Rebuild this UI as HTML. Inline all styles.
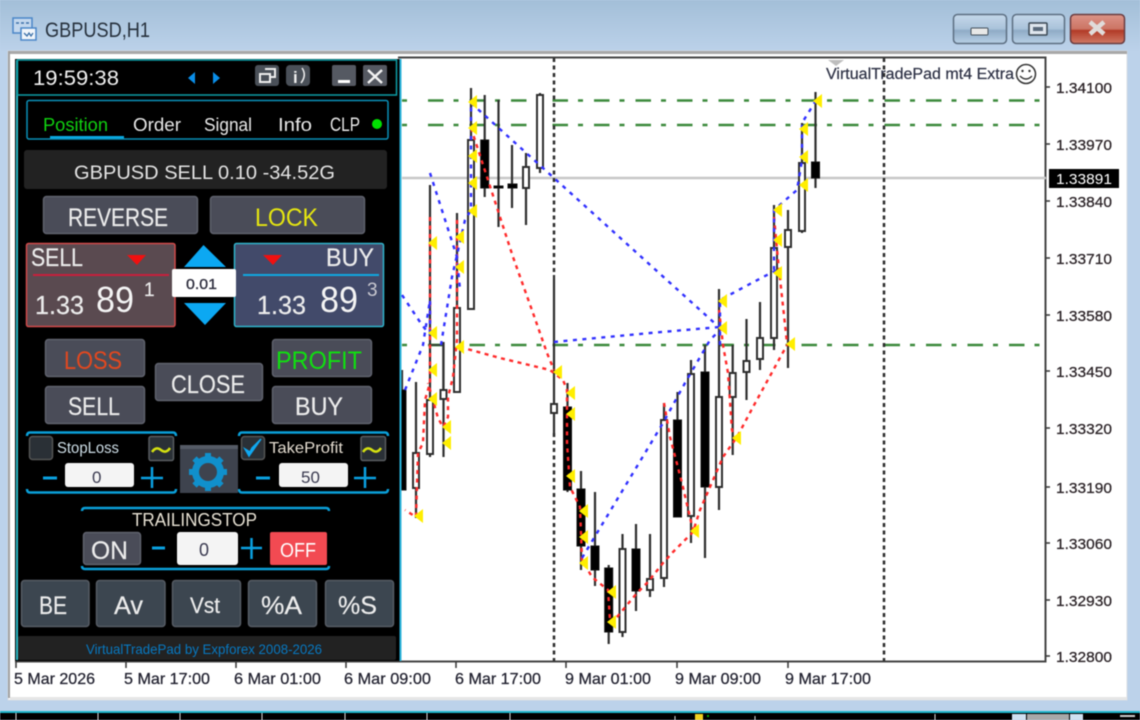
<!DOCTYPE html>
<html><head><meta charset="utf-8"><title>GBPUSD,H1</title>
<style>
html,body{margin:0;padding:0;width:1140px;height:720px;overflow:hidden;background:#bcd2ea}
svg{display:block;filter:blur(.55px)}
text{font-family:"Liberation Sans",sans-serif}
.b{fill:#4a4c58;stroke:#5f626d;stroke-width:1.5}
.c{fill:#3c4650;stroke:#565c64;stroke-width:1.5}
.t{fill:#ececec;stroke:#ececec;stroke-width:.2}
.w{fill:#fff;stroke:#2e2e2e;stroke-width:2}
.k{fill:#000;stroke:#111;stroke-width:1}
.br{fill:none;stroke:#0a9fd8;stroke-width:2.5}
.px{font-size:15px;fill:#2a2226;stroke:#2a2226;stroke-width:.25}
.tx{font-size:16px;fill:#222230;stroke:#222230;stroke-width:.25}
</style></head><body>
<svg width="1140" height="720" viewBox="0 0 1140 720" xmlns="http://www.w3.org/2000/svg">
<defs>
<linearGradient id="sky" x1="0" y1="0" x2="0" y2="1"><stop offset="0" stop-color="#a3bfd8"/><stop offset="1" stop-color="#bcd2ea"/></linearGradient>
<linearGradient id="wb" x1="0" y1="0" x2="0" y2="1"><stop offset="0" stop-color="#c5d8ea"/><stop offset=".5" stop-color="#a9c2da"/><stop offset=".55" stop-color="#8fabc6"/><stop offset="1" stop-color="#b8d0e6"/></linearGradient>
<linearGradient id="wr" x1="0" y1="0" x2="0" y2="1"><stop offset="0" stop-color="#dc9488"/><stop offset=".5" stop-color="#cc7464"/><stop offset=".55" stop-color="#b23a26"/><stop offset="1" stop-color="#d07a66"/></linearGradient>
</defs>
<rect width="1140" height="720" fill="#bcd2ea"/>
<rect width="1140" height="52" fill="url(#sky)"/>
<!-- title icon -->
<rect x="13" y="18" width="19" height="15" fill="#c4d8ee" stroke="#4a86c8" stroke-width="1.5"/>
<path d="M16 23h3M21 23h3M26 23h3" stroke="#3a6fa8" stroke-width="1.5"/>
<rect x="21" y="28" width="15" height="12" fill="#f2f6fb" stroke="#4a86c8" stroke-width="1.5"/>
<path d="M24 33l3 3 2-3 2 3 2-3" stroke="#3a6fa8" stroke-width="1.3" fill="none"/>
<text x="45" y="37" font-size="21" fill="#26303c" textLength="105" lengthAdjust="spacingAndGlyphs">GBPUSD,H1</text>
<!-- window buttons -->
<rect x="953.5" y="14.500" width="53" height="29" rx="4" fill="url(#wb)" stroke="#5d6f82" stroke-width="1.5"/>
<rect x="971" y="28" width="17" height="7" rx="1" fill="#e8e8e8" stroke="#44505c"/>
<rect x="1012.500" y="14.500" width="52" height="29" rx="4" fill="url(#wb)" stroke="#5d6f82" stroke-width="1.500"/>
<rect x="1029" y="23" width="18" height="12" rx="1" fill="#dfe6ee" stroke="#3b4854" stroke-width="1.500"/>
<rect x="1033" y="27" width="10" height="4" fill="#5a6a7c"/>
<rect x="1070.500" y="14.500" width="54" height="29" rx="4" fill="url(#wr)" stroke="#6a3c40" stroke-width="1.500"/>
<path d="M1090 22l14 12M1104 22l-14 12" stroke="#e0dcda" stroke-width="4.500"/>
<!-- client -->
<rect x="8" y="51" width="1119" height="649" fill="#fff" stroke="#d8dde3" stroke-width="1"/>
<rect x="8" y="51" width="1119" height="3" fill="#a8a8a8"/>
<rect x="8" y="51" width="2" height="647" fill="#a0a0a0"/>
<rect x="10" y="697" width="1117" height="3" fill="#e6e6e6"/>
<!-- bottom strip -->
<rect y="711" width="1140" height="2" fill="#1fb7cc"/>
<rect y="713" width="1140" height="7" fill="#000"/>
<path d="M16 713v7M98 713v7M180 713v7M262 713v7M345 713v7M427 713v7M510 713v7M675 716v4M755 716v4M935 714v6" stroke="#ddd" stroke-width="1"/>
<rect x="695" y="714" width="8" height="6" fill="#f0d020"/><rect x="707" y="715" width="2" height="2" fill="#0a0"/>
<rect x="1012" y="714" width="14" height="6" fill="#cfe0f0"/><rect x="1027" y="714" width="42" height="6" fill="#a8a8a8"/><rect x="1070" y="714" width="13" height="6" fill="#cfe0f0"/><rect x="1120" y="715" width="15" height="2" fill="#ccc"/>

<!-- chart frame -->
<rect x="401" y="58" width="644.500" height="603" fill="#fff"/>
<path d="M15 661.500H1045.500V57.500H398" fill="none" stroke="#444" stroke-width="2"/>
<!-- price ticks -->
<path d="M1046 87h4M1046 144h4M1046 201h4M1046 258h4M1046 315h4M1046 371h4M1046 428h4M1046 487h4M1046 543h4M1046 600h4M1046 656h4" stroke="#333" stroke-width="1.500"/>
<!-- time ticks -->
<path d="M16 662v6M126 662v6M236 662v6M346 662v6M456 662v6M566 662v6M677 662v6M788 662v6" stroke="#333" stroke-width="1.500"/>
<!-- green levels -->
<g stroke="#3c8a3c" stroke-width="2.400" fill="none" stroke-dasharray="15.500 10 5 11">
<path d="M428 100.500H1040" stroke-dashoffset="0"/>
<path d="M428 125H1040"/>
<path d="M428 345H1040"/>
</g>
<path d="M402 100.500h13M402 125h13M402 345h13" stroke="#3c8a3c" stroke-width="2.400" stroke-dasharray="5 11" />
<path d="M430 345h13M719 345h14" stroke="#3c8a3c" stroke-width="2.400"/>
<!-- price line & separators -->
<path d="M402 178H1046" stroke="#c8c8c8" stroke-width="2.400"/>
<path d="M554 58V275M554 433V661M884 58V661" stroke="#2c2c2c" stroke-width="2.500" stroke-dasharray="4 3.500"/>
<!-- wicks -->
<path d="M402 370V490M416 382V518M430 185V457M443.500 342V457M457 213V392M471 88V309M484.700 95V197M498.500 100V227M512 145V208M526 153V225M540 93V173M554 275V433M567.500 383V492M581 471V570M595 492V586M608.700 565V644M622.500 534V637M636 524V611M650 534V597M664 403V587M677.500 392V517M691 360V543M705 345V558M719 289V510M732.700 345V455M746.500 319V400M760 302V370M774 205V350M788 210V368M802 123V233M815.500 92V188" stroke="#2e2e2e" stroke-width="2.200" fill="none"/>
<!-- bodies white -->
<rect class="w" x="413" y="453" width="6" height="35"/>
<rect class="w" x="427" y="400" width="6" height="54"/>
<path d="M430 345h13v45" fill="none" stroke="#333" stroke-width="1.500"/>
<rect class="w" x="440.500" y="390" width="6" height="9"/>
<rect class="w" x="454" y="308" width="6" height="84"/>
<rect class="w" x="468" y="140" width="6" height="169"/>
<rect class="w" x="523" y="167" width="6" height="21"/>
<rect class="w" x="537" y="95" width="6" height="73"/>
<rect class="w" x="551" y="404" width="6" height="9"/>
<rect class="w" x="619.500" y="549" width="6" height="83"/>
<rect class="w" x="647" y="579" width="6" height="11"/>
<rect class="w" x="661" y="420" width="6" height="158"/>
<rect class="w" x="688" y="374" width="6" height="142"/>
<rect class="w" x="716" y="397" width="6" height="90"/>
<rect class="w" x="729.700" y="373" width="6" height="24"/>
<rect class="w" x="743.500" y="361" width="6" height="11"/>
<rect class="w" x="757" y="338" width="6" height="21"/>
<rect class="w" x="771" y="248" width="6" height="90"/>
<rect class="w" x="785" y="230" width="6" height="17"/>
<rect class="w" x="799" y="163" width="6" height="68"/>
<!-- bodies black -->
<rect class="k" x="401" y="390" width="5" height="100"/>
<rect class="k" x="480.700" y="140" width="8" height="48"/>
<rect class="k" x="494" y="186" width="9" height="2"/>
<rect class="k" x="508" y="184" width="9" height="4"/>
<rect class="k" x="563.500" y="407" width="8" height="83"/>
<rect class="k" x="577" y="489" width="8" height="57"/>
<rect class="k" x="591" y="546" width="8" height="24"/>
<rect class="k" x="604.700" y="568" width="8" height="64"/>
<rect class="k" x="632" y="549" width="8" height="42"/>
<rect class="k" x="673.500" y="420" width="8" height="97"/>
<rect class="k" x="701" y="372" width="8" height="115"/>
<rect class="k" x="811.500" y="162" width="8" height="16"/>
<!-- red lines -->
<g fill="none" stroke="#ff2a2a" stroke-width="2.400" stroke-dasharray="4 4.500">
<path d="M471 128L488 180L500 217L513 257L533 313L547 353L554 370"/>
<path d="M460 347L500 358L550 370L563 380L567 390V443L570 487L580 507L582 560L592 577L608 590L610 620"/>
<path d="M610 622L617 617L637 593L648 582L663 563L673 552L693 532L700 510L723 457L737 437L753 407L787 345"/>
<path d="M664 403L670 437L682 483L693 530"/>
<path d="M719 310L723 345L728 373L732 430L735 438"/>
<path d="M774 217L778 260L787 343"/>
<path d="M430 217V383L425 400L423 443L418 453L416 517L405 510"/>
<path d="M457 220V340L453 377L448 397V417L443 427L438 418L428 383"/>
</g>
<!-- blue lines -->
<g fill="none" stroke="#3030ff" stroke-width="2.400" stroke-dasharray="4 5.500">
<path d="M402 295L422 325L430 335"/>
<path d="M405 390L423 345L430 300V335"/>
<path d="M430 173L457 257L460 290"/>
<path d="M441 345L452 277L465 220L471 210V103"/>
<path d="M471 103L554 178L648 263L720 328"/>
<path d="M554 342L650 333L720 327"/>
<path d="M582 558L663 423L685 383L710 340L720 330"/>
<path d="M720 345V300L763 277L777 270"/>
<path d="M774 270V210L797 190L802 160V123L815 102"/>
</g>
<!-- yellow arrows -->
<g fill="#ffee00">
<path d="M468 102l9-7v14zM468 128l9-7v14zM468 156l9-7v14zM468 183l9-7v14zM468 211l9-7v14zM428 243l9-7v14zM455 237l9-7v14zM455 267l9-7v14zM428 333l9-7v14zM455 347l9-7v14zM428 370l9-7v14zM428 399l9-7v14zM442 427l9-7v14zM442 443l9-7v14zM414 516l9-7v14zM553 372l9-7v14zM566 393l9-7v14zM566 414l9-7v14zM566 476l9-7v14zM579 511l9-7v14zM579 537l9-7v14zM579 563l9-7v14zM607 592l9-7v14zM607 622l9-7v14zM690 531l9-7v14zM732 438l9-7v14zM786 344l9-7v14zM718 301l9-7v14zM718 328l9-7v14zM773 273l9-7v14zM773 240l9-7v14zM773 210l9-7v14zM799 185l9-7v14zM799 157l9-7v14zM799 129l9-7v14zM813 101l9-7v14z"/>
</g>
<!-- chart labels -->
<path d="M828 60h16l-8 6z" fill="#bdbdbd"/>
<text x="826" y="79" font-size="15.500" fill="#2c3044" stroke="#2c3044" stroke-width=".2" textLength="188" lengthAdjust="spacingAndGlyphs">VirtualTradePad mt4 Extra</text>
<circle cx="1026" cy="74" r="9.500" fill="#fff" stroke="#333" stroke-width="1.500"/>
<circle cx="1022.500" cy="71" r="1.200" fill="#333"/><circle cx="1029.500" cy="71" r="1.200" fill="#333"/>
<path d="M1020 76q6 6 12 0" fill="none" stroke="#333" stroke-width="1.300"/>
<!-- price labels -->
<text class="px" x="1056" y="93" textLength="56" lengthAdjust="spacingAndGlyphs">1.34100</text>
<text class="px" x="1056" y="150" textLength="56" lengthAdjust="spacingAndGlyphs">1.33970</text>
<text class="px" x="1056" y="207" textLength="56" lengthAdjust="spacingAndGlyphs">1.33840</text>
<text class="px" x="1056" y="264" textLength="56" lengthAdjust="spacingAndGlyphs">1.33710</text>
<text class="px" x="1056" y="321" textLength="56" lengthAdjust="spacingAndGlyphs">1.33580</text>
<text class="px" x="1056" y="377" textLength="56" lengthAdjust="spacingAndGlyphs">1.33450</text>
<text class="px" x="1056" y="434" textLength="56" lengthAdjust="spacingAndGlyphs">1.33320</text>
<text class="px" x="1056" y="493" textLength="56" lengthAdjust="spacingAndGlyphs">1.33190</text>
<text class="px" x="1056" y="549" textLength="56" lengthAdjust="spacingAndGlyphs">1.33060</text>
<text class="px" x="1056" y="606" textLength="56" lengthAdjust="spacingAndGlyphs">1.32930</text>
<text class="px" x="1056" y="662" textLength="56" lengthAdjust="spacingAndGlyphs">1.32800</text>
<rect x="1049" y="169" width="70" height="19" fill="#000"/>
<text x="1056" y="184" font-size="15" fill="#fff" textLength="56" lengthAdjust="spacingAndGlyphs">1.33891</text>
<!-- time labels -->
<text class="tx" x="14" y="684" textLength="81" lengthAdjust="spacingAndGlyphs">5 Mar 2026</text>
<text class="tx" x="124" y="684" textLength="86" lengthAdjust="spacingAndGlyphs">5 Mar 17:00</text>
<text class="tx" x="234" y="684" textLength="87" lengthAdjust="spacingAndGlyphs">6 Mar 01:00</text>
<text class="tx" x="344" y="684" textLength="87" lengthAdjust="spacingAndGlyphs">6 Mar 09:00</text>
<text class="tx" x="455" y="684" textLength="86" lengthAdjust="spacingAndGlyphs">6 Mar 17:00</text>
<text class="tx" x="565" y="684" textLength="86" lengthAdjust="spacingAndGlyphs">9 Mar 01:00</text>
<text class="tx" x="675" y="684" textLength="86" lengthAdjust="spacingAndGlyphs">9 Mar 09:00</text>
<text class="tx" x="785" y="684" textLength="86" lengthAdjust="spacingAndGlyphs">9 Mar 17:00</text>

<!-- PANEL -->
<rect x="15" y="59" width="385" height="602" fill="#000"/>
<rect x="16" y="60" width="2" height="600" fill="#2cb9c4"/>
<rect x="399.500" y="59" width="2" height="602" fill="#2cb5dc"/>
<rect x="17.500" y="60" width="379" height="35" fill="none" stroke="#0d9ea6" stroke-width="1.500"/>
<text x="33" y="85" font-size="21" fill="#f0f0f0" textLength="86" lengthAdjust="spacingAndGlyphs">19:59:38</text>
<path d="M188 78l7-6v12zM220 78l-7-6v12z" fill="#0a8ee8"/>
<rect x="255" y="65" width="24" height="21" rx="3" fill="#4a5058"/>
<path d="M265 69h10v8h-5M260 74h10v8h-10z" fill="none" stroke="#eee" stroke-width="2"/>
<rect x="286" y="65" width="24" height="21" rx="4" fill="#4a5058"/>
<text x="293" y="83" font-size="17" font-weight="bold" fill="#eee">i</text>
<path d="M302 68q5 7 -1 15" fill="none" stroke="#eee" stroke-width="1.500"/>
<rect x="332" y="65" width="24" height="21" rx="2" fill="#555962"/>
<rect x="338" y="80" width="12" height="3" fill="#fff"/>
<rect x="363" y="65" width="24" height="21" rx="2" fill="#555962"/>
<path d="M368 70l14 13M382 70l-14 13" stroke="#f2f2f2" stroke-width="2.500"/>
<!-- tabs -->
<rect x="27" y="100.500" width="361" height="38.500" rx="2" fill="none" stroke="#0b90b8" stroke-width="1.500"/>
<rect x="50" y="136" width="74" height="2.500" fill="#0aa8e0"/>
<text x="43" y="131" font-size="18" fill="#10d010" textLength="65" lengthAdjust="spacingAndGlyphs">Position</text>
<text x="133" y="131" font-size="18" fill="#e8e8e8" textLength="48" lengthAdjust="spacingAndGlyphs">Order</text>
<text x="204" y="131" font-size="18" fill="#e8e8e8" textLength="48" lengthAdjust="spacingAndGlyphs">Signal</text>
<text x="278" y="131" font-size="18" fill="#e8e8e8" textLength="34" lengthAdjust="spacingAndGlyphs">Info</text>
<text x="330" y="131" font-size="19" fill="#e8e8e8" textLength="30" lengthAdjust="spacingAndGlyphs">CLP</text>
<circle cx="377" cy="124" r="5" fill="#00e000"/>
<!-- status -->
<rect x="24" y="150" width="363" height="39" rx="3" fill="#222"/>
<text x="74" y="179" font-size="19.500" fill="#e4e4e4" textLength="261" lengthAdjust="spacingAndGlyphs">GBPUSD SELL 0.10 -34.52G</text>
<!-- reverse lock -->
<rect class="b" x="43.500" y="196.500" width="154" height="37" rx="3"/>
<text x="68" y="226" font-size="25" class="t" textLength="100" lengthAdjust="spacingAndGlyphs">REVERSE</text>
<rect class="b" x="210.500" y="196.500" width="154" height="37" rx="3"/>
<text x="255" y="226" font-size="25" fill="#e6e610" textLength="63" lengthAdjust="spacingAndGlyphs">LOCK</text>
<!-- sell box -->
<rect x="26.500" y="243.500" width="148.500" height="83" rx="2" fill="#5a4a50" stroke="#d24a4a" stroke-width="1.500"/>
<text x="31" y="266" font-size="25" class="t" textLength="52" lengthAdjust="spacingAndGlyphs">SELL</text>
<path d="M127 255h19l-9 10z" fill="#f01010"/>
<rect x="33" y="274" width="136" height="2" fill="#c8203c"/>
<text x="35" y="314" font-size="26" class="t" textLength="49" lengthAdjust="spacingAndGlyphs">1.33</text>
<text x="96" y="312" font-size="36" fill="#f4f4f4" textLength="38" lengthAdjust="spacingAndGlyphs">89</text>
<text x="144" y="296" font-size="19" class="t">1</text>
<!-- buy box -->
<rect x="234.500" y="243.500" width="149" height="83" rx="2" fill="#424a6a" stroke="#30b4cc" stroke-width="1.500"/>
<text x="326" y="266" font-size="25" class="t" textLength="48" lengthAdjust="spacingAndGlyphs">BUY</text>
<path d="M263 255h19l-9 10z" fill="#f01010"/>
<rect x="243" y="274" width="136" height="2" fill="#10a8e0"/>
<text x="257" y="314" font-size="26" class="t" textLength="49" lengthAdjust="spacingAndGlyphs">1.33</text>
<text x="320" y="312" font-size="36" fill="#f4f4f4" textLength="38" lengthAdjust="spacingAndGlyphs">89</text>
<text x="367" y="296" font-size="19" fill="#c8c8d0">3</text>
<!-- lot -->
<path d="M203.500 245l22.500 22h-42zM184 303h42l-21 22z" fill="#0ca8f2"/>
<rect x="172" y="269" width="64" height="28" rx="2" fill="#fff"/>
<text x="186" y="289" font-size="15" fill="#2a2a3a" stroke="#2a2a3a" stroke-width=".3" textLength="31" lengthAdjust="spacingAndGlyphs">0.01</text>
<!-- main buttons -->
<rect class="b" x="45.500" y="339.500" width="99" height="37" rx="3"/>
<text x="64" y="369" font-size="25" fill="#e4481e" textLength="58" lengthAdjust="spacingAndGlyphs">LOSS</text>
<rect class="b" x="272.500" y="339.500" width="99" height="37" rx="3"/>
<text x="276" y="369" font-size="25" fill="#10e010" textLength="86" lengthAdjust="spacingAndGlyphs">PROFIT</text>
<rect class="b" x="45.500" y="386.500" width="99" height="37" rx="3"/>
<text x="68" y="415" font-size="25" class="t" textLength="52" lengthAdjust="spacingAndGlyphs">SELL</text>
<rect class="b" x="272.500" y="386.500" width="99" height="37" rx="3"/>
<text x="295" y="415" font-size="25" class="t" textLength="48" lengthAdjust="spacingAndGlyphs">BUY</text>
<rect class="b" x="155.500" y="363.500" width="107" height="37" rx="3"/>
<text x="171" y="393" font-size="25" class="t" textLength="74" lengthAdjust="spacingAndGlyphs">CLOSE</text>
<!-- SL / TP brackets -->
<path class="br" d="M27 436q0-3.500 3-3.500H173q3 0 3 3.500M27 489q0 3.500 3 3.500H173q3 0 3-3.500"/>
<path class="br" d="M239 436q0-3.500 3-3.500H385q3 0 3 3.500M239 489q0 3.500 3 3.500H385q3 0 3-3.500"/>
<!-- SL -->
<rect x="29.500" y="436.500" width="23" height="23" rx="3" fill="#2a3036" stroke="#555" stroke-width="1.500"/>
<text x="57" y="453" font-size="16" fill="#cfdfe8" textLength="62" lengthAdjust="spacingAndGlyphs">StopLoss</text>
<rect x="149" y="436.500" width="24.500" height="24" rx="2" fill="#2a3036" stroke="#585c60" stroke-width="1.500"/>
<path d="M152 452q4-6 9-2t9-2" fill="none" stroke="#d4e010" stroke-width="2.500"/>
<rect x="43" y="476.500" width="14" height="3" fill="#0aa0e0"/>
<rect x="65" y="463" width="69" height="24" rx="3" fill="#f4f4f4"/>
<text x="92" y="483" font-size="17" fill="#3a3a50">0</text>
<path d="M141 478h22M152 467v21" stroke="#0aa0e0" stroke-width="2.500"/>
<!-- TP -->
<rect x="241.500" y="436.500" width="23" height="23" rx="3" fill="#2a3036" stroke="#555" stroke-width="1.500"/>
<path d="M245 449l4 7 12-17-9 9-2 4z" fill="#10a8f0" stroke="#10a8f0" stroke-width="1.500"/>
<text x="269" y="453" font-size="16" fill="#e4dcd0" textLength="74" lengthAdjust="spacingAndGlyphs">TakeProfit</text>
<rect x="361" y="436.500" width="24.500" height="24" rx="2" fill="#2a3036" stroke="#585c60" stroke-width="1.500"/>
<path d="M363 452q4-6 9-2t9-2" fill="none" stroke="#d4e010" stroke-width="2.500"/>
<rect x="256" y="476.500" width="14" height="3" fill="#0aa0e0"/>
<rect x="279" y="463" width="69" height="24" rx="3" fill="#f4f4f4"/>
<text x="301" y="483" font-size="17" fill="#3a3a50">50</text>
<path d="M354 478h22M365 467v21" stroke="#0aa0e0" stroke-width="2.500"/>
<!-- gear -->
<rect x="180" y="445" width="58" height="48" fill="#3e434e"/>
<rect x="180" y="445" width="58" height="4" fill="#555b66"/>
<circle cx="208" cy="472" r="12.500" fill="none" stroke="#1090cc" stroke-width="7"/>
<path d="M208 453v6M208 485v6M189 472h6M221 472h6M194.500 458.500l4.500 4.500M217 481l4.500 4.500M221.500 458.500l-4.500 4.500M199 481l-4.500 4.500" stroke="#1090cc" stroke-width="6"/>
<!-- trailing -->
<path class="br" d="M82 511q0-3 3-3H326q3 0 3 3M82 566q0 3 3 3H326q3 0 3-3"/>
<text x="132" y="526" font-size="18" fill="#e8e2d4" textLength="125" lengthAdjust="spacingAndGlyphs">TRAILINGSTOP</text>
<rect class="b" x="83.500" y="532.500" width="57" height="32" rx="3"/>
<text x="91" y="559" font-size="25" class="t" textLength="37" lengthAdjust="spacingAndGlyphs">ON</text>
<rect x="152" y="546.500" width="13" height="3" fill="#0aa0e0"/>
<rect x="177" y="532" width="61" height="33" rx="3" fill="#f4f4f4"/>
<text x="199" y="556" font-size="18" fill="#3a3a50">0</text>
<path d="M241 548h21M251.500 538v21" stroke="#0aa0e0" stroke-width="2.500"/>
<rect x="270" y="532" width="57" height="33" rx="2" fill="#f24a52"/>
<text x="280" y="557" font-size="20" fill="#fff" textLength="36" lengthAdjust="spacingAndGlyphs">OFF</text>
<!-- bottom buttons -->
<rect class="c" x="21.500" y="580.500" width="67.500" height="46" rx="3"/>
<text x="39" y="614" font-size="25" class="t" textLength="28" lengthAdjust="spacingAndGlyphs">BE</text>
<rect class="c" x="96.500" y="580.500" width="68.500" height="46" rx="3"/>
<text x="114" y="614" font-size="25" class="t" textLength="29" lengthAdjust="spacingAndGlyphs">Av</text>
<rect class="c" x="172.500" y="580.500" width="68" height="46" rx="3"/>
<text x="190" y="613" font-size="22" class="t" textLength="30" lengthAdjust="spacingAndGlyphs">Vst</text>
<rect class="c" x="248.500" y="580.500" width="68" height="46" rx="3"/>
<text x="261" y="614" font-size="25" class="t" textLength="41" lengthAdjust="spacingAndGlyphs">%A</text>
<rect class="c" x="325.500" y="580.500" width="68" height="46" rx="3"/>
<text x="338" y="614" font-size="25" class="t" textLength="39" lengthAdjust="spacingAndGlyphs">%S</text>
<!-- footer -->
<rect x="18" y="636" width="378" height="24" rx="2" fill="#222"/>
<text x="86" y="654" font-size="14" fill="#0878c0" textLength="236" lengthAdjust="spacingAndGlyphs">VirtualTradePad by Expforex 2008-2026</text>
</svg>
</body></html>
